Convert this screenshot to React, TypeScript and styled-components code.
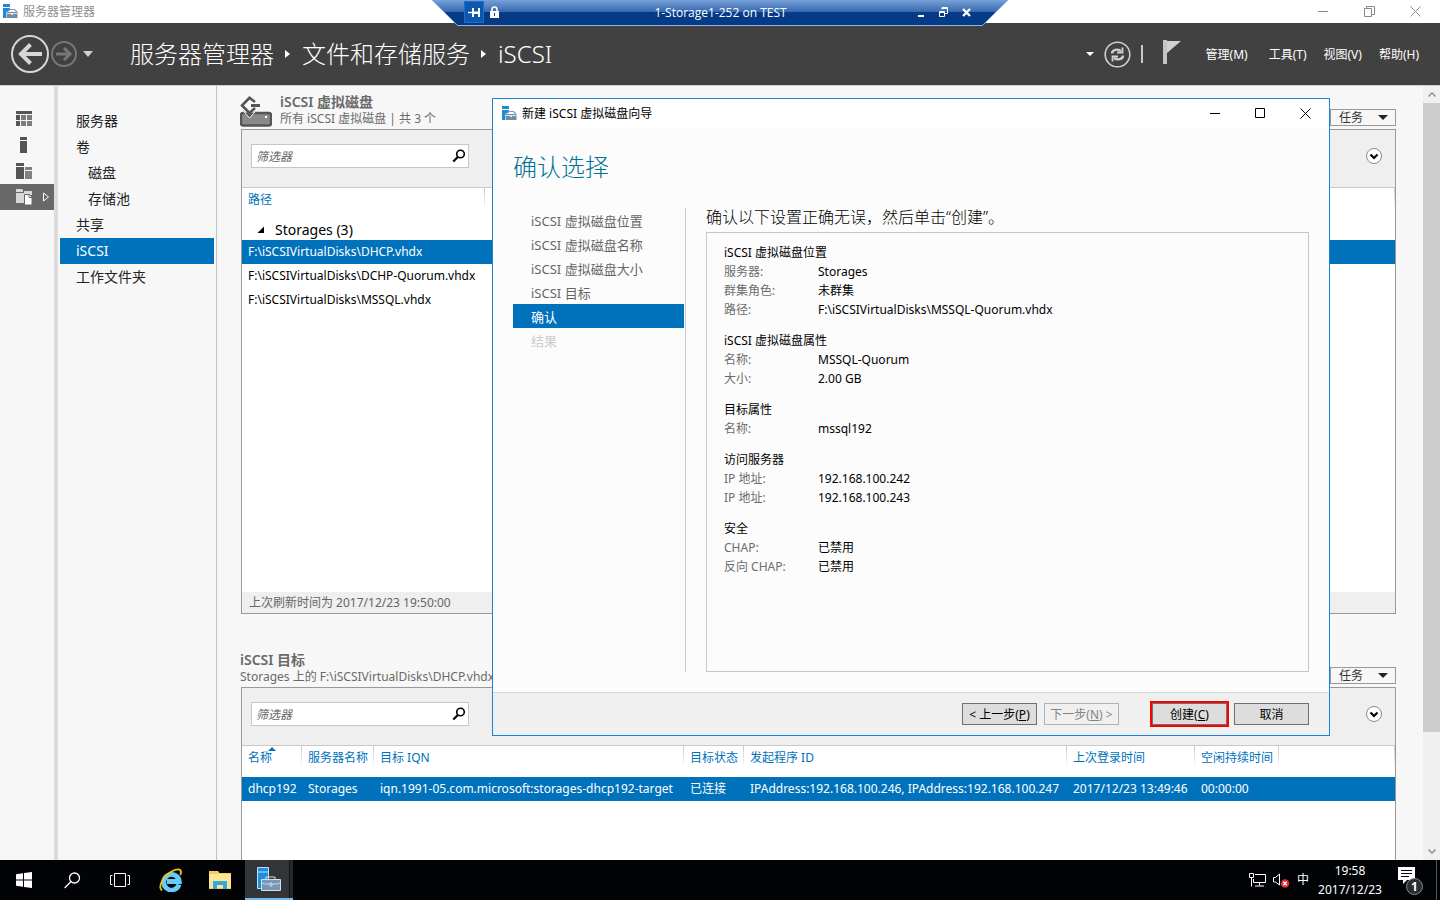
import React from "react";
import styled, { createGlobalStyle, css } from "styled-components";

const latin = `"Noto Sans", "Noto Sans CJK SC", sans-serif`;
const blue = "#0072bc";

const GlobalStyle = createGlobalStyle`
  * { box-sizing: border-box; }
  html, body { margin: 0; padding: 0; }
  body { font-family: ${latin}; font-size: 12px; line-height: 16px; color: #000; background: #f7f7f7; overflow: hidden; }
  button, input { font: inherit; color: inherit; }
  button { padding: 0; border: 0; background: none; cursor: pointer; }
  a { color: inherit; text-decoration: none; }
  h1, h2, h3, p, ul, dl, dd, dt { margin: 0; padding: 0; font-weight: 400; }
  ul { list-style: none; }
  svg { display: block; flex: none; }
`;

const Desktop = styled.div`
  position: relative;
  display: flex;
  flex-direction: column;
  height: 100vh;
`;

/* ---------- remote session bar ---------- */

const SessionBar = styled.div`
  position: absolute;
  top: 0;
  left: 50%;
  transform: translateX(-50%);
  z-index: 5;
  width: 576px;
  height: 26px;
  display: flex;
  align-items: center;
  justify-content: space-between;
  padding: 0 31px 2px 32px;
  color: #fff;
`;
const SessionShape = styled.svg`
  position: absolute;
  inset: 0;
  z-index: -1;
`;
const SessionTitle = styled.span`
  padding-top: 2px;
  font-family: "Open Sans", sans-serif;
`;
const SessionTools = styled.div<{ $gap: number }>`
  display: flex;
  align-items: center;
  gap: ${(p) => p.$gap}px;
  width: 60px;
`;
const PinButton = styled.button`
  display: grid;
  place-items: center;
  width: 20px;
  height: 22px;
  border: 1px solid #1b6fd0;
  background: #0f56ad;
`;

/* ---------- server manager window ---------- */

const TitleBar = styled.header`
  display: flex;
  align-items: center;
  height: 23px;
  padding: 0 19px 0 3px;
  background: #fff;
  color: #8f8f8f;
`;
const TitleText = styled.span`
  flex: 1;
  margin-left: 5px;
`;
const WindowButtons = styled.div<{ $gap: number }>`
  display: flex;
  align-items: center;
  gap: ${(p) => p.$gap}px;
`;

const Header = styled.div`
  display: flex;
  align-items: center;
  height: 63px;
  flex: none;
  padding: 0 21px 0 11px;
  background: #414141;
  border-bottom: 1px solid #cfcfcf;
  color: #fff;
`;
const NavArrows = styled.div`
  display: flex;
  align-items: center;
  gap: 2px;
  width: 119px;
`;
const Breadcrumb = styled.nav`
  display: flex;
  align-items: center;
  flex: 1;
  font-size: 24px;
  line-height: 32px;
  font-weight: 300;
  white-space: nowrap;
`;
const CrumbMark = styled.svg`
  margin: 0 12px 0 11px;
`;
const HeaderTools = styled.div`
  display: flex;
  align-items: center;
  gap: 10px;
  margin-right: 25px;
`;
const HeaderMenu = styled.nav`
  display: flex;
  gap: 17px;
`;
const MenuItem = styled.button<{ $apart?: boolean }>`
  padding-top: 2px;
  margin-right: ${(p) => (p.$apart ? 4 : 0)}px;
  white-space: nowrap;
`;

const Body = styled.div`
  display: flex;
  flex: 1;
  min-height: 0;
`;

const Rail = styled.nav`
  width: 58px;
  flex: none;
  padding-top: 20px;
  border-right: 4px solid #dcdcdc;
`;
const RailItem = styled.button<{ $active?: boolean }>`
  display: flex;
  align-items: center;
  justify-content: space-between;
  width: 100%;
  height: 26px;
  padding: 0 5px 0 16px;
  background: ${(p) => (p.$active ? "#686868" : "transparent")};
`;

const SideNav = styled.nav`
  width: 159px;
  flex: none;
  padding: 22px 2px 0;
  border-right: 1px solid #c3c3c3;
  display: flex;
  flex-direction: column;
`;
const SideLink = styled.a<{ $indent?: boolean; $active?: boolean }>`
  height: 26px;
  padding-left: ${(p) => (p.$indent ? 28 : 16)}px;
  font-size: 14px;
  line-height: 25px;
  color: ${(p) => (p.$active ? "#fff" : "#222")};
  background: ${(p) => (p.$active ? blue : "transparent")};
`;

const Content = styled.main`
  flex: 1;
  min-width: 0;
  padding: 7px 27px 0 23px;
  overflow: hidden;
`;

const ScrollBar = styled.div`
  width: 17px;
  flex: none;
  display: flex;
  flex-direction: column;
  background: #f0f0f0;
`;
const ScrollEnd = styled.div`
  height: 17px;
  display: grid;
  place-items: center;
`;
const ScrollTrack = styled.div`
  flex: 1;
`;
const ScrollThumb = styled.div`
  height: 85%;
  background: #cdcdcd;
`;

/* ---------- tiles ---------- */

const Tile = styled.section`
  margin-bottom: 37px;
`;
const TileHead = styled.div`
  display: flex;
  height: 36px;
  color: #6a6a6a;
`;
const DiskHolder = styled.div`
  padding-top: 3px;
`;
const TileTitles = styled.div<{ $withIcon?: boolean }>`
  flex: 1;
  margin-left: ${(p) => (p.$withIcon ? 8 : 0)}px;
`;
const TileTitle = styled.h2`
  font-size: 14px;
  line-height: 18px;
  font-weight: 600;
`;
const TaskButton = styled.button`
  align-self: flex-end;
  display: flex;
  align-items: center;
  justify-content: space-between;
  width: 66px;
  height: 17px;
  margin-bottom: 3px;
  padding: 0 7px 0 8px;
  border: 1px solid #999;
  line-height: 15px;
  color: #333;
`;
const Panel = styled.div<{ $height: number }>`
  display: flex;
  flex-direction: column;
  min-height: ${(p) => p.$height}px;
  margin-left: 1px;
  border: 1px solid #999;
  background: #fff;
`;
const PanelBar = styled.div`
  display: flex;
  justify-content: space-between;
  align-items: center;
  height: 58px;
  padding: 0 12px 5px 9px;
  background: #efefef;
  border-bottom: 1px solid #c8c8c8;
`;
const FilterBox = styled.label`
  display: flex;
  align-items: center;
  width: 218px;
  height: 24px;
  padding: 0 2px 0 4px;
  border: 1px solid #c6c6c6;
  background: #fff;
`;
const FilterInput = styled.input`
  flex: 1;
  min-width: 0;
  padding: 2px 0 0;
  border: 0;
  outline: 0;
  background: none;
  &::placeholder {
    color: #666;
    opacity: 1;
    font-style: italic;
  }
`;
const Expand = styled.button`
  width: 17px;
  height: 17px;
`;
const PanelFoot = styled.p`
  margin-top: auto;
  height: 21px;
  padding-left: 7px;
  line-height: 22px;
  background: #efefef;
  color: #666;
`;

const Grid = styled.table`
  width: 100%;
  table-layout: fixed;
  border-collapse: collapse;
`;
const Col = styled.col<{ $w?: number }>`
  width: ${(p) => (p.$w ? `${p.$w}px` : "auto")};
`;
const HeadCell = styled.th`
  position: relative;
  height: 31px;
  padding: 4px 0 0 6px;
  vertical-align: top;
  text-align: left;
  font-weight: 400;
  white-space: nowrap;
  color: ${blue};
  background: linear-gradient(#c8c8c8, #fff) right top / 1px 22px no-repeat;
`;
const SortMark = styled.svg`
  position: absolute;
  left: 26px;
  top: 1px;
`;
const GroupCell = styled.td`
  height: 21px;
  padding: 0 0 0 15px;
  font-size: 14px;
  line-height: 20px;
`;
const GroupLabel = styled.span`
  display: flex;
  align-items: center;
  gap: 10px;
`;
const Row = styled.tr<{ $selected?: boolean }>`
  height: 24px;
  ${(p) =>
    p.$selected &&
    css`
      color: #fff;
      background: ${blue};
    `}
`;
const Cell = styled.td`
  padding: 0 0 1px 6px;
  white-space: nowrap;
`;

/* ---------- wizard ---------- */

const Wizard = styled.section`
  position: absolute;
  z-index: 4;
  top: 98px;
  left: 492px;
  right: 110px;
  background: #fcfcfc;
  border: 1px solid #1883d7;
`;
const WizardTitle = styled.div`
  display: flex;
  align-items: center;
  height: 30px;
  padding: 0 18px 1px 9px;
  background: #fff;
`;
const WizardBody = styled.div`
  padding: 22px 20px 20px;
`;
const WizardHeading = styled.h1`
  margin-bottom: 25px;
  font-size: 24px;
  line-height: 32px;
  font-weight: 300;
  color: #007297;
`;
const WizardColumns = styled.div`
  display: grid;
  grid-template-columns: 173px 1fr;
  column-gap: 20px;
`;
const Steps = styled.ol`
  list-style: none;
  margin: 0;
  padding: 0 1px 0 0;
  border-right: 1px solid #c8c8c8;
`;
const Step = styled.li<{ $state?: "current" | "pending" }>`
  height: 24px;
  padding-left: 18px;
  font-size: 13px;
  line-height: 26px;
  color: ${(p) => (p.$state === "current" ? "#fff" : p.$state === "pending" ? "#ccc" : "#666")};
  background: ${(p) => (p.$state === "current" ? blue : "transparent")};
`;
const Prompt = styled.h2`
  margin-bottom: 6px;
  font-size: 16px;
  line-height: 18px;
  font-weight: 300;
`;
const Summary = styled.div`
  min-height: 440px;
  padding: 10px 17px;
  border: 1px solid #c8c8c8;
`;
const Group = styled.section`
  margin-bottom: 12px;
  line-height: 19px;
`;
const GroupTitle = styled.h3`
  font-size: 12px;
`;
const Facts = styled.dl`
  display: grid;
  grid-template-columns: 94px 1fr;
`;
const FactName = styled.dt`
  color: #6d6d6d;
`;
const WizardFooter = styled.div`
  display: flex;
  justify-content: flex-end;
  gap: 33px;
  padding: 10px 20px;
  border-top: 1px solid #d9d9d9;
  background: #f0f0f0;
`;
const ButtonPair = styled.div`
  display: flex;
  gap: 7px;
`;
const DialogButton = styled.button<{ $marked?: boolean }>`
  width: 75px;
  height: 22px;
  padding-top: 1px;
  border: 1px solid #707070;
  background: #ddd;
  line-height: 20px;
  white-space: nowrap;
  ${(p) => p.$marked && "box-shadow: 0 0 0 2px #f00;"}
  &:disabled {
    color: #838383;
    background: #f0f0f0;
    border-color: #adb2b5;
  }
`;

/* ---------- taskbar ---------- */

const Taskbar = styled.footer`
  display: flex;
  justify-content: space-between;
  height: 40px;
  flex: none;
  background: #010307;
  color: #fff;
`;
const TaskGroup = styled.div`
  display: flex;
`;
const TaskItem = styled.button<{ $w: number; $active?: boolean }>`
  display: grid;
  place-items: center;
  width: ${(p) => p.$w}px;
  height: 40px;
  ${(p) =>
    p.$active &&
    css`
      background: #333538;
      border-bottom: 2px solid #76b9ed;
      box-shadow: inset -3px 0 #26282b, inset -4px 0 #15171a;
    `}
`;
const Tray = styled.div`
  display: flex;
  align-items: center;
  gap: 7px;
`;
const Clock = styled.time`
  width: 68px;
  margin-right: 7px;
  text-align: center;
  line-height: 19px;
`;
const Notice = styled.div`
  position: relative;
  width: 25px;
  height: 26px;
  margin-right: 6px;
`;
const NoticeCount = styled.span`
  position: absolute;
  right: 0;
  bottom: -2px;
  width: 17px;
  height: 17px;
  border: 1px solid #888;
  border-radius: 50%;
  background: #2b2d30;
  line-height: 15px;
  font-weight: 700;
  text-align: center;
`;
const ShowDesktop = styled.div`
  width: 4px;
  height: 40px;
  border-left: 1px solid #55575a;
`;

/* ---------- drawings ---------- */

const ManagerIcon = () => (
  <svg width="15" height="15" viewBox="0 0 15 15">
    <path d="M0 0h7v3H0z M0 4h7v2.500L3 8v6H0z" fill="#1c8ad6" />
    <path d="M3.500 8h11v6h-11z" fill="#6f8ea6" />
    <path d="M4 8l2.500-2.500h5L14 8" fill="none" stroke="#7e9db5" strokeWidth="1.200" />
    <path d="M4 9.500h10" stroke="#dfe8ef" />
    <path d="M8 9h2v2H8z" fill="#dfe8ef" />
  </svg>
);

const CaretDown = ({ w, color }: { w: number; color: string }) => (
  <svg width={w} height={w / 2} viewBox="0 0 10 5">
    <path d="M0 0h10L5 5z" fill={color} />
  </svg>
);

const CrumbArrow = () => (
  <CrumbMark width="5" height="8" viewBox="0 0 5 8">
    <path d="M0 0l5 4-5 4z" fill="#fff" />
  </CrumbMark>
);

const MinMaxClose = ({ color, gap, restore }: { color: string; gap: number; restore?: boolean }) => (
  <WindowButtons $gap={gap}>
    <button aria-label="最小化">
      <svg width="11" height="11" viewBox="0 0 11 11">
        <path d="M0 5.500h10" stroke={color} />
      </svg>
    </button>
    <button aria-label="最大化">
      <svg width="11" height="11" viewBox="0 0 11 11" fill="none" stroke={color}>
        {restore ? <path d="M.5 2.500h7v8h-7zM2.500 2.500v-2h8v8h-3" /> : <path d="M.5.5h9v9h-9z" />}
      </svg>
    </button>
    <button aria-label="关闭">
      <svg width="11" height="11" viewBox="0 0 11 11">
        <path d="M.5.5l10 10M10.500.5l-10 10" stroke={color} />
      </svg>
    </button>
  </WindowButtons>
);

const Magnifier = () => (
  <svg width="14" height="14" viewBox="0 0 14 14" fill="none" stroke="#000">
    <circle cx="8.500" cy="5" r="3.800" strokeWidth="1.600" />
    <path d="M5.800 8L1.300 12.500" strokeWidth="2.200" />
  </svg>
);

const ExpandIcon = () => (
  <svg width="17" height="17" viewBox="0 0 17 17" fill="none">
    <circle cx="8" cy="8" r="7.500" fill="#fff" stroke="#8a8a8a" />
    <path d="M4.500 6.500L8 10l3.500-3.500" stroke="#000" strokeWidth="2.200" />
  </svg>
);

const DiskIcon = () => (
  <svg width="32" height="31" viewBox="0 0 32 31">
    <rect x="1" y="17" width="30" height="12.500" rx="2" fill="#8a8a8a" stroke="#555" strokeWidth="2.400" />
    <path d="M25 20h2v2h-2z" fill="#fff" />
    <path d="M4 16l5.500 6 5.500-6z" fill="#555" stroke="#f7f7f7" />
    <path d="M15 6L9.500 1.800 2 9.500l7.500 7.500 5.500-5" fill="none" stroke="#555" strokeWidth="2.600" />
    <path d="M11 9.500h9" stroke="#555" strokeWidth="3" />
  </svg>
);

/* ---------- data ---------- */

const sideLinks = [
  { text: "服务器" },
  { text: "卷" },
  { text: "磁盘", indent: true },
  { text: "存储池", indent: true },
  { text: "共享" },
  { text: "iSCSI", active: true },
  { text: "工作文件夹" },
];

const disks = [
  "F:\\iSCSIVirtualDisks\\DHCP.vhdx",
  "F:\\iSCSIVirtualDisks\\DCHP-Quorum.vhdx",
  "F:\\iSCSIVirtualDisks\\MSSQL.vhdx",
];

const targetColumns: { title: string; width?: number; value: string }[] = [
  { title: "名称", width: 60, value: "dhcp192" },
  { title: "服务器名称", width: 72, value: "Storages" },
  { title: "目标 IQN", width: 310, value: "iqn.1991-05.com.microsoft:storages-dhcp192-target" },
  { title: "目标状态", width: 60, value: "已连接" },
  { title: "发起程序 ID", width: 323, value: "IPAddress:192.168.100.246, IPAddress:192.168.100.247" },
  { title: "上次登录时间", width: 128, value: "2017/12/23 13:49:46" },
  { title: "空闲持续时间", width: 84, value: "00:00:00" },
  { title: "", value: "" },
];

const steps: { text: string; state?: "current" | "pending" }[] = [
  { text: "iSCSI 虚拟磁盘位置" },
  { text: "iSCSI 虚拟磁盘名称" },
  { text: "iSCSI 虚拟磁盘大小" },
  { text: "iSCSI 目标" },
  { text: "确认", state: "current" },
  { text: "结果", state: "pending" },
];

const summary: { title: string; facts: [string, string][] }[] = [
  {
    title: "iSCSI 虚拟磁盘位置",
    facts: [
      ["服务器:", "Storages"],
      ["群集角色:", "未群集"],
      ["路径:", "F:\\iSCSIVirtualDisks\\MSSQL-Quorum.vhdx"],
    ],
  },
  { title: "iSCSI 虚拟磁盘属性", facts: [["名称:", "MSSQL-Quorum"], ["大小:", "2.00 GB"]] },
  { title: "目标属性", facts: [["名称:", "mssql192"]] },
  { title: "访问服务器", facts: [["IP 地址:", "192.168.100.242"], ["IP 地址:", "192.168.100.243"]] },
  { title: "安全", facts: [["CHAP:", "已禁用"], ["反向 CHAP:", "已禁用"]] },
];

/* ---------- parts ---------- */

const PanelTools = () => (
  <PanelBar>
    <FilterBox>
      <FilterInput type="text" placeholder="筛选器" aria-label="筛选器" />
      <Magnifier />
    </FilterBox>
    <Expand aria-label="展开">
      <ExpandIcon />
    </Expand>
  </PanelBar>
);

const Tasks = () => (
  <TaskButton>
    任务
    <CaretDown w={10} color="#222" />
  </TaskButton>
);

const DiskTile = () => (
  <Tile>
    <TileHead>
      <DiskHolder>
        <DiskIcon />
      </DiskHolder>
      <TileTitles $withIcon>
        <TileTitle>iSCSI 虚拟磁盘</TileTitle>
        <p>所有 iSCSI 虚拟磁盘 | 共 3 个</p>
      </TileTitles>
      <Tasks />
    </TileHead>
    <Panel $height={485}>
      <PanelTools />
      <Grid>
        <colgroup>
          <Col $w={243} />
          <Col />
        </colgroup>
        <thead>
          <tr>
            <HeadCell scope="col">路径</HeadCell>
            <HeadCell />
          </tr>
        </thead>
        <tbody>
          <tr>
            <GroupCell colSpan={2}>
              <GroupLabel>
                <svg width="8" height="8" viewBox="0 0 8 8">
                  <path d="M7 .5V7H.5z" fill="#000" />
                </svg>
                Storages (3)
              </GroupLabel>
            </GroupCell>
          </tr>
          {disks.map((path, i) => (
            <Row key={path} $selected={i === 0}>
              <Cell>{path}</Cell>
              <Cell />
            </Row>
          ))}
        </tbody>
      </Grid>
      <PanelFoot>上次刷新时间为 2017/12/23 19:50:00</PanelFoot>
    </Panel>
  </Tile>
);

const TargetTile = () => (
  <Tile>
    <TileHead>
      <TileTitles>
        <TileTitle>iSCSI 目标</TileTitle>
        <p>Storages 上的 F:\iSCSIVirtualDisks\DHCP.vhdx</p>
      </TileTitles>
      <Tasks />
    </TileHead>
    <Panel $height={300}>
      <PanelTools />
      <Grid>
        <colgroup>
          {targetColumns.map((c) => (
            <Col key={c.title} $w={c.width} />
          ))}
        </colgroup>
        <thead>
          <tr>
            {targetColumns.map((c, i) => (
              <HeadCell key={c.title} scope="col">
                {c.title}
                {i === 0 && (
                  <SortMark width="8" height="4" viewBox="0 0 8 4">
                    <path d="M0 4l4-4 4 4z" fill={blue} />
                  </SortMark>
                )}
              </HeadCell>
            ))}
          </tr>
        </thead>
        <tbody>
          <Row $selected>
            {targetColumns.map((c) => (
              <Cell key={c.title}>{c.value}</Cell>
            ))}
          </Row>
        </tbody>
      </Grid>
    </Panel>
  </Tile>
);

const ConfirmWizard = () => (
  <Wizard role="dialog" aria-label="新建 iSCSI 虚拟磁盘向导">
    <WizardTitle>
      <ManagerIcon />
      <TitleText>新建 iSCSI 虚拟磁盘向导</TitleText>
      <MinMaxClose color="#000" gap={34} />
    </WizardTitle>
    <WizardBody>
      <WizardHeading>确认选择</WizardHeading>
      <WizardColumns>
        <Steps>
          {steps.map((s) => (
            <Step key={s.text} $state={s.state}>
              {s.text}
            </Step>
          ))}
        </Steps>
        <div>
          <Prompt>确认以下设置正确无误，然后单击“创建”。</Prompt>
          <Summary>
            {summary.map((g) => (
              <Group key={g.title}>
                <GroupTitle>{g.title}</GroupTitle>
                <Facts>
                  {g.facts.map(([name, value]) => (
                    <React.Fragment key={value + name}>
                      <FactName>{name}</FactName>
                      <dd>{value}</dd>
                    </React.Fragment>
                  ))}
                </Facts>
              </Group>
            ))}
          </Summary>
        </div>
      </WizardColumns>
    </WizardBody>
    <WizardFooter>
      <ButtonPair>
        <DialogButton>
          &lt; 上一步(<u>P</u>)
        </DialogButton>
        <DialogButton disabled>
          下一步(<u>N</u>) &gt;
        </DialogButton>
      </ButtonPair>
      <ButtonPair>
        <DialogButton $marked>
          创建(<u>C</u>)
        </DialogButton>
        <DialogButton>取消</DialogButton>
      </ButtonPair>
    </WizardFooter>
  </Wizard>
);

const RemoteBar = () => (
  <SessionBar>
    <SessionShape width="576" height="26" viewBox="0 0 576 26">
      <defs>
        <linearGradient id="session" x1="0" y1="0" x2="0" y2="1">
          <stop offset="0" stopColor="#7ba5dc" />
          <stop offset=".5" stopColor="#3566ad" />
          <stop offset=".51" stopColor="#043a86" />
          <stop offset="1" stopColor="#043a86" />
        </linearGradient>
      </defs>
      <path d="M-1-1L25.500 25.500H550.500L577-1z" fill="url(#session)" stroke="#8fb1de" />
    </SessionShape>
    <SessionTools $gap={6}>
      <PinButton aria-label="固定">
        <svg width="13" height="11" viewBox="0 0 13 11">
          <path d="M0 5.500h5" stroke="#fff" strokeWidth="1.400" />
          <path d="M4 1h2v9H4zM6 4.500h4v2.500H6zM10 1h2v9h-2z" fill="#fff" />
        </svg>
      </PinButton>
      <svg width="9" height="12" viewBox="0 0 9 12">
        <path d="M2 6V3.500a2.500 2.500 0 015 0V6" fill="none" stroke="#fff" strokeWidth="1.600" />
        <path d="M0 5h9v7H0z" fill="#fff" />
        <path d="M4 7h1v3H4z" fill="#043a86" />
      </svg>
    </SessionTools>
    <SessionTitle>1-Storage1-252 on TEST</SessionTitle>
    <SessionTools $gap={14}>
      <svg width="8" height="10" viewBox="0 0 8 10">
        <path d="M1 9h6" stroke="#fff" strokeWidth="2" />
      </svg>
      <svg width="9" height="10" viewBox="0 0 9 10" fill="none" stroke="#fff">
        <path d="M.5 4.500h5v5h-5zM.5 5.500h5M3 2.500v-2h5.500v6H6M3 1.500h5" />
      </svg>
      <svg width="9" height="9" viewBox="0 0 9 9">
        <path d="M1 1l7 7M8 1L1 8" stroke="#fff" strokeWidth="2.400" />
      </svg>
    </SessionTools>
  </SessionBar>
);

export default function App() {
  return (
    <Desktop>
      <GlobalStyle />
      <RemoteBar />
      <TitleBar>
        <ManagerIcon />
        <TitleText>服务器管理器</TitleText>
        <MinMaxClose color="#8a8a8a" gap={35} restore />
      </TitleBar>
      <Header>
        <NavArrows>
          <button aria-label="后退">
            <svg width="38" height="38" viewBox="0 0 38 38" fill="none" stroke="#d6d6d6">
              <circle cx="19" cy="19" r="18" strokeWidth="2" />
              <path d="M31 19H10M19.500 9.500L10 19l9.500 9.500" strokeWidth="4" />
            </svg>
          </button>
          <button aria-label="前进">
            <svg width="26" height="26" viewBox="0 0 26 26" fill="none" stroke="#777">
              <circle cx="13" cy="13" r="12" strokeWidth="2" />
              <path d="M5 13h14M13 7l6 6-6 6" strokeWidth="3" />
            </svg>
          </button>
          <button aria-label="历史记录">
            <svg width="20" height="6" viewBox="0 0 20 6">
              <path d="M4 0h10l-5 6z" fill="#d0d0d0" />
            </svg>
          </button>
        </NavArrows>
        <Breadcrumb>
          <a href="#home">服务器管理器</a>
          <CrumbArrow />
          <a href="#storage">文件和存储服务</a>
          <CrumbArrow />
          <a href="#iscsi">iSCSI</a>
        </Breadcrumb>
        <HeaderTools>
          <CaretDown w={8} color="#fff" />
          <button aria-label="刷新">
            <svg width="27" height="27" viewBox="0 0 27 27" fill="none" stroke="#cfcfcf">
              <circle cx="13.500" cy="13.500" r="12.300" strokeWidth="1.600" />
              <path d="M8 12.500c0-4 6-5 9-2.500M19 14.500c0 4-6 5-9 2.500" strokeWidth="2.400" />
              <path d="M18.500 6.500v5h-5.500M8.500 20.500v-5H14" strokeWidth="1.800" />
            </svg>
          </button>
          <svg width="2" height="18" viewBox="0 0 2 18">
            <path d="M0 0h2v18H0z" fill="#c8c8c8" />
          </svg>
          <button aria-label="通知">
            <svg width="28" height="28" viewBox="0 0 28 28">
              <path d="M10 0h4v24h-4z" fill="#c4c4c4" />
              <path d="M14 1h14L14 13z" fill="#d2d2d2" />
            </svg>
          </button>
        </HeaderTools>
        <HeaderMenu>
          <MenuItem $apart>管理(M)</MenuItem>
          <MenuItem>工具(T)</MenuItem>
          <MenuItem>视图(V)</MenuItem>
          <MenuItem>帮助(H)</MenuItem>
        </HeaderMenu>
      </Header>
      <Body>
        <Rail>
          <RailItem aria-label="仪表板">
            <svg width="16" height="16" viewBox="0 0 16 16">
              <path d="M0 0h16v3H0zM0 4h4v5H0zM0 10h4v5H0z" fill="#555" />
              <path d="M5 4h5v5H5zM11 4h5v5h-5zM5 10h5v5H5zM11 10h5v5h-5z" fill="#7c7c7c" />
            </svg>
          </RailItem>
          <RailItem aria-label="本地服务器">
            <svg width="16" height="16" viewBox="0 0 16 16">
              <path d="M4 0h7v3H4zM4 4h7v12H4z" fill="#555" />
            </svg>
          </RailItem>
          <RailItem aria-label="所有服务器">
            <svg width="16" height="16" viewBox="0 0 16 16">
              <path d="M0 0h8v3H0zM0 4h8v12H0z" fill="#555" />
              <path d="M9 4h7v3H9zM9 8h7v8H9z" fill="#808080" />
            </svg>
          </RailItem>
          <RailItem aria-label="文件和存储服务" $active>
            <svg width="16" height="16" viewBox="0 0 16 16">
              <path d="M0 0h6l1 1v2H0zM0 4h8V2h8v4H8v8H0z" fill="#d8d8d8" />
              <path d="M8.500 5.500h5l2.500 2.500v8H8.500z" fill="#fff" stroke="#686868" />
              <path d="M13 5.500v3h3" fill="none" stroke="#686868" />
            </svg>
            <svg width="6" height="10" viewBox="0 0 6 10">
              <path d="M.5 1l5 4-5 4z" fill="none" stroke="#fff" />
            </svg>
          </RailItem>
        </Rail>
        <SideNav>
          {sideLinks.map((l) => (
            <SideLink key={l.text} href="#nav" $indent={l.indent} $active={l.active}>
              {l.text}
            </SideLink>
          ))}
        </SideNav>
        <Content>
          <DiskTile />
          <TargetTile />
        </Content>
        <ScrollBar aria-hidden="true">
          <ScrollEnd>
            <svg width="8" height="5" viewBox="0 0 8 5">
              <path d="M.5 4.500L4 1l3.500 3.500" fill="none" stroke="#8a8a8a" strokeWidth="1.400" />
            </svg>
          </ScrollEnd>
          <ScrollTrack>
            <ScrollThumb />
          </ScrollTrack>
          <ScrollEnd>
            <svg width="8" height="5" viewBox="0 0 8 5">
              <path d="M.5.500L4 4 7.500.500" fill="none" stroke="#8a8a8a" strokeWidth="1.400" />
            </svg>
          </ScrollEnd>
        </ScrollBar>
      </Body>
      <ConfirmWizard />
      <Taskbar>
        <TaskGroup>
          <TaskItem $w={48} aria-label="开始">
            <svg width="16" height="16" viewBox="0 0 16 16">
              <path d="M0 2.300L7 1.200V7.500H0zM8 1.100L16 0v7.500H8zM0 8.500h7v6.300L0 13.700zM8 8.500h8V16l-8-1.100z" fill="#fff" />
            </svg>
          </TaskItem>
          <TaskItem $w={48} aria-label="搜索">
            <svg width="17" height="17" viewBox="0 0 17 17" fill="none" stroke="#fff" strokeWidth="1.300">
              <circle cx="10.500" cy="6" r="5" />
              <path d="M7 9.500L.7 16" />
            </svg>
          </TaskItem>
          <TaskItem $w={48} aria-label="任务视图">
            <svg width="20" height="14" viewBox="0 0 20 14" fill="none" stroke="#fff">
              <path d="M4.500.5h11v13h-11zM2.500 2.500h-2v9h2M17.500 2.500h2v9h-2" />
            </svg>
          </TaskItem>
          <TaskItem $w={53} aria-label="Internet Explorer">
            <svg width="24" height="24" viewBox="0 0 24 24" fill="none">
              <path d="M20 16.500A7.800 7.800 0 1 1 20.300 13.500H8" stroke="#62cdf8" strokeWidth="4.800" />
              <path d="M3 22.500C-1.500 19 4 8 13 3.200 17.500 1 22 .5 22 4c0 1-.3 2-.8 3" stroke="#f4c20d" strokeWidth="1.800" />
            </svg>
          </TaskItem>
          <TaskItem $w={48} aria-label="文件资源管理器">
            <svg width="24" height="18" viewBox="0 0 24 18">
              <path d="M0 0h9l1.500 2H22v16H0z" fill="#f5cd5f" />
              <path d="M0 3h22v14H0z" fill="#fde596" />
              <path d="M4 18v-8h14v8h-4v-4H8v4z" fill="#33a9dd" />
            </svg>
          </TaskItem>
          <TaskItem $w={48} $active aria-label="服务器管理器">
            <svg width="26" height="25" viewBox="0 0 26 25">
              <path d="M1.500.5h11v21h-11z" fill="#1c8fe3" stroke="#bfe0f7" />
              <path d="M1.500 5h11" stroke="#bfe0f7" />
              <path d="M10 12.500V10h9v2.500" fill="none" stroke="#d5dfe9" />
              <path d="M5.500 12.500h19v11h-19z" fill="#7797b5" stroke="#d5dfe9" />
              <path d="M5.500 15.500l3 1.500h13l3-1.500M14 16h2v3h-2z" fill="none" stroke="#c7d6e4" />
            </svg>
          </TaskItem>
        </TaskGroup>
        <Tray>
          <svg width="17" height="14" viewBox="0 0 17 14" fill="none" stroke="#fff">
            <path d="M6 1.500h10.500v8H4.500V6M10.500 9.500v3M6 13h9M.5.500h4v4h-4zM2.500 4.500v9" />
          </svg>
          <svg width="17" height="15" viewBox="0 0 17 15" fill="none">
            <path d="M.5 4.500h2L6.500 1v11L2.500 9h-2z" stroke="#fff" />
            <circle cx="12" cy="10.500" r="4.300" fill="#dc2b32" />
            <path d="M10.300 8.800l3.400 3.400M13.700 8.800l-3.400 3.400" stroke="#fff" strokeWidth="1.300" />
          </svg>
          <span>中</span>
          <Clock>
            19:58
            <br />
            2017/12/23
          </Clock>
          <Notice>
            <svg width="17" height="18" viewBox="0 0 17 18">
              <path d="M0 0h17v13h-8l-4 4v-4H0z" fill="#fff" />
              <path d="M3 3.500h11M3 6.500h11M3 9.500h8" stroke="#010307" />
            </svg>
            <NoticeCount>1</NoticeCount>
          </Notice>
          <ShowDesktop />
        </Tray>
      </Taskbar>
    </Desktop>
  );
}
